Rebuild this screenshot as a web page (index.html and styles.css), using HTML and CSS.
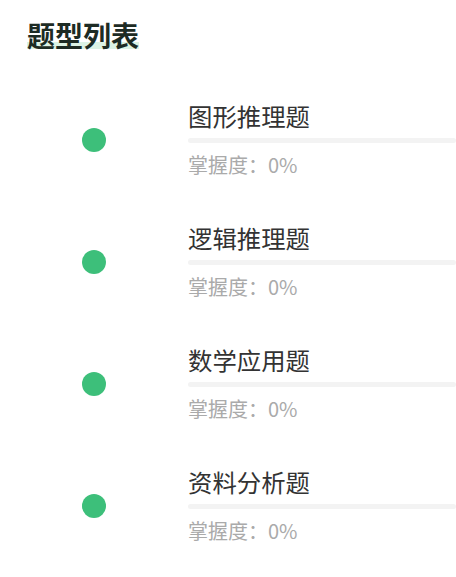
FILE: index.html
```html
<!DOCTYPE html>
<html lang="zh-CN">
<head>
<meta charset="utf-8">
<title>题型列表</title>
<link rel="stylesheet" href="styles.css">
</head>
<body>
<div class="page">
  <div class="header"><span class="title">题型列表</span></div>
  <div class="list">
    <div class="item">
      <div class="dot-col"><span class="dot"></span></div>
      <div class="info">
        <div class="name">图形推理题</div>
        <div class="bar"><div class="fill" style="width:0%"></div></div>
        <div class="sub">掌握度：0%</div>
      </div>
    </div>
    <div class="item">
      <div class="dot-col"><span class="dot"></span></div>
      <div class="info">
        <div class="name">逻辑推理题</div>
        <div class="bar"><div class="fill" style="width:0%"></div></div>
        <div class="sub">掌握度：0%</div>
      </div>
    </div>
    <div class="item">
      <div class="dot-col"><span class="dot"></span></div>
      <div class="info">
        <div class="name">数学应用题</div>
        <div class="bar"><div class="fill" style="width:0%"></div></div>
        <div class="sub">掌握度：0%</div>
      </div>
    </div>
    <div class="item">
      <div class="dot-col"><span class="dot"></span></div>
      <div class="info">
        <div class="name">资料分析题</div>
        <div class="bar"><div class="fill" style="width:0%"></div></div>
        <div class="sub">掌握度：0%</div>
      </div>
    </div>
  </div>
</div>
</body>
</html>
```
FILE: styles.css
```css
html, body {
  margin: 0;
  padding: 0;
  background: #ffffff;
}
body {
  font-family: "Noto Sans CJK SC", "Noto Sans", sans-serif;
  overflow: hidden;
}
.page {
  width: 456px;
}
.header {
  padding: 16px 0 0 27px;
  height: 38px;
}
.title {
  font-size: 28px;
  line-height: 38px;
  font-weight: 700;
  color: #1d2b24;
  background: linear-gradient(to bottom, transparent 68%, #dcf3e5 68%, #dcf3e5 84%, transparent 84%);
}
.list {
  margin-top: 24.5px;
}
.item {
  display: grid;
  grid-template-columns: 106px 1fr;
  column-gap: 82px;
  align-items: center;
  padding: 22.5px 0;
}
.dot-col {
  padding-left: 82px;
  display: flex;
  align-items: center;
}
.dot {
  display: block;
  width: 24px;
  height: 24px;
  border-radius: 50%;
  background: #3dbf7a;
}
.info {
  display: flex;
  flex-direction: column;
}
.name {
  font-size: 24.4px;
  line-height: 30px;
  color: #333333;
}
.bar {
  margin-top: 7px;
  height: 5px;
  background: #f3f3f3;
  border-radius: 3px;
}
.fill {
  height: 100%;
  background: #3dbf7a;
}
.sub {
  margin-top: 9px;
  font-size: 20px;
  line-height: 26px;
  color: #aaaaaa;
}
```
